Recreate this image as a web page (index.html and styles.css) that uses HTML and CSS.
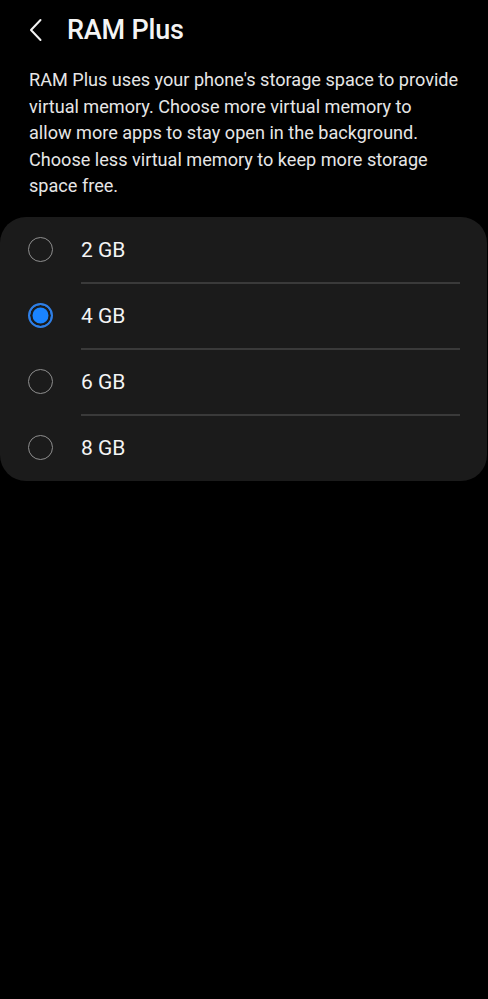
FILE: index.html
```html
<!DOCTYPE html>
<html lang="en">
<head>
    <meta charset="UTF-8">
    <meta name="viewport" content="width=device-width, initial-scale=1.0">
    <title>RAM Plus</title>
    <link rel="stylesheet" href="styles.css">
</head>
<body>
    <header class="top-bar">
        <button class="back-btn" aria-label="Back">
            <svg width="14" height="24" viewBox="0 0 14 24">
                <path d="M11.5 2 L2 12 L11.5 22" fill="none" stroke="#f2f2f2" stroke-width="2" stroke-linecap="round" stroke-linejoin="round"/>
            </svg>
        </button>
        <h1 class="title">RAM Plus</h1>
    </header>

    <p class="description">RAM Plus uses your phone's storage space to provide<br>
        virtual memory. Choose more virtual memory to<br>
        allow more apps to stay open in the background.<br>
        Choose less virtual memory to keep more storage<br>
        space free.</p>

    <div class="option-card">
        <label class="option">
            <span class="radio"></span>
            <span class="option-label">2 GB</span>
        </label>
        <label class="option selected">
            <span class="radio"></span>
            <span class="option-label">4 GB</span>
        </label>
        <label class="option">
            <span class="radio"></span>
            <span class="option-label">6 GB</span>
        </label>
        <label class="option">
            <span class="radio"></span>
            <span class="option-label">8 GB</span>
        </label>
    </div>
</body>
</html>
```

FILE: styles.css
```css
* {
    margin: 0;
    padding: 0;
    box-sizing: border-box;
}
body {
    font-family: Roboto, "Noto Sans", sans-serif;
    background-color: #000;
    color: #f2f2f2;
    height: 100vh;
    overflow: hidden;
}
.top-bar {
    display: flex;
    align-items: center;
    height: 60px;
    padding-left: 29px;
}
.back-btn {
    background: none;
    border: none;
    width: 16px;
    height: 24px;
    display: flex;
    align-items: center;
    margin-right: 22px;
}
.title {
    font-size: 27px;
    font-weight: 500;
    letter-spacing: -0.2px;
    color: #f4f4f4;
}
.description {
    padding: 7px 10px 0 29px;
    font-size: 18.1px;
    line-height: 26.6px;
    color: #e6e6e6;
    white-space: nowrap;
}
.option-card {
    margin-top: 17px;
    margin-right: 1px;
    background-color: #1b1b1b;
    border-radius: 26px;
    overflow: hidden;
}
.option {
    display: flex;
    align-items: center;
    height: 66px;
    padding-left: 28px;
    position: relative;
}
.option + .option::before {
    content: "";
    position: absolute;
    top: -1px;
    left: 81px;
    right: 27px;
    height: 2px;
    background-color: #3a3a3a;
}
.radio {
    width: 25px;
    height: 25px;
    border-radius: 50%;
    border: 1.5px solid #8e8e8e;
    margin-right: 28px;
    flex-shrink: 0;
}
.option.selected .radio {
    border: 2px solid #2f7fe6;
    background-color: #1a84ff;
    box-shadow: inset 0 0 0 2.5px #1b1b1b;
}
.option-label {
    font-size: 21px;
    color: #f4f4f4;
}
```
